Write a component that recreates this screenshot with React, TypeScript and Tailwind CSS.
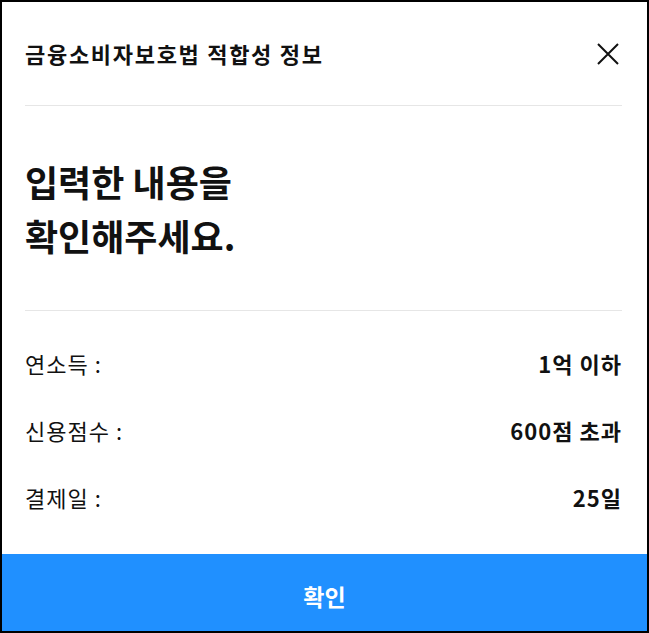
import React from "react";

const rows = [
  { label: "연소득 :", value: "1억 이하" },
  { label: "신용점수 :", value: "600점 초과" },
  { label: "결제일 :", value: "25일" },
];

const App: React.FC = () => {
  return (
    <div
      className="w-[649px] h-[633px] border-2 border-black bg-white flex flex-col"
      style={{ fontFamily: '"Noto Sans CJK KR", "Noto Sans", sans-serif' }}
    >
      <div className="flex-1 flex flex-col pl-[23px] pr-[25px]">
        {/* Header */}
        <div className="h-[104px] flex items-center justify-between border-b border-[#e6e6e6]">
          <h1 className="text-[22px] font-bold text-[#111] tracking-[1.7px]">
            금융소비자보호법 적합성 정보
          </h1>
          <button className="w-[26px] h-[24px] flex items-center justify-start">
            <svg width="24" height="22" viewBox="0 0 24 22">
              <path
                d="M2 1 L22 21 M22 1 L2 21"
                stroke="#111"
                strokeWidth="2"
                fill="none"
              />
            </svg>
          </button>
        </div>

        {/* Heading */}
        <div className="h-[205px] flex items-center border-b border-[#e6e6e6]">
          <p className="text-[36px] font-bold leading-[54px] text-[#111]">
            입력한 내용을
            <br />
            확인해주세요.
          </p>
        </div>

        {/* Info rows */}
        <div className="pt-[19px]">
          {rows.map((row) => (
            <div
              key={row.label}
              className="h-[67px] flex items-center justify-between text-[22px] text-[#111]"
            >
              <span className="font-normal tracking-[1px]">{row.label}</span>
              <span className="font-bold tracking-[1px]">{row.value}</span>
            </div>
          ))}
        </div>
      </div>

      <button className="h-[77px] w-full bg-[#2090ff] text-white text-[23px] font-bold pt-[8px]">
        확인
      </button>
    </div>
  );
};

export default App;
